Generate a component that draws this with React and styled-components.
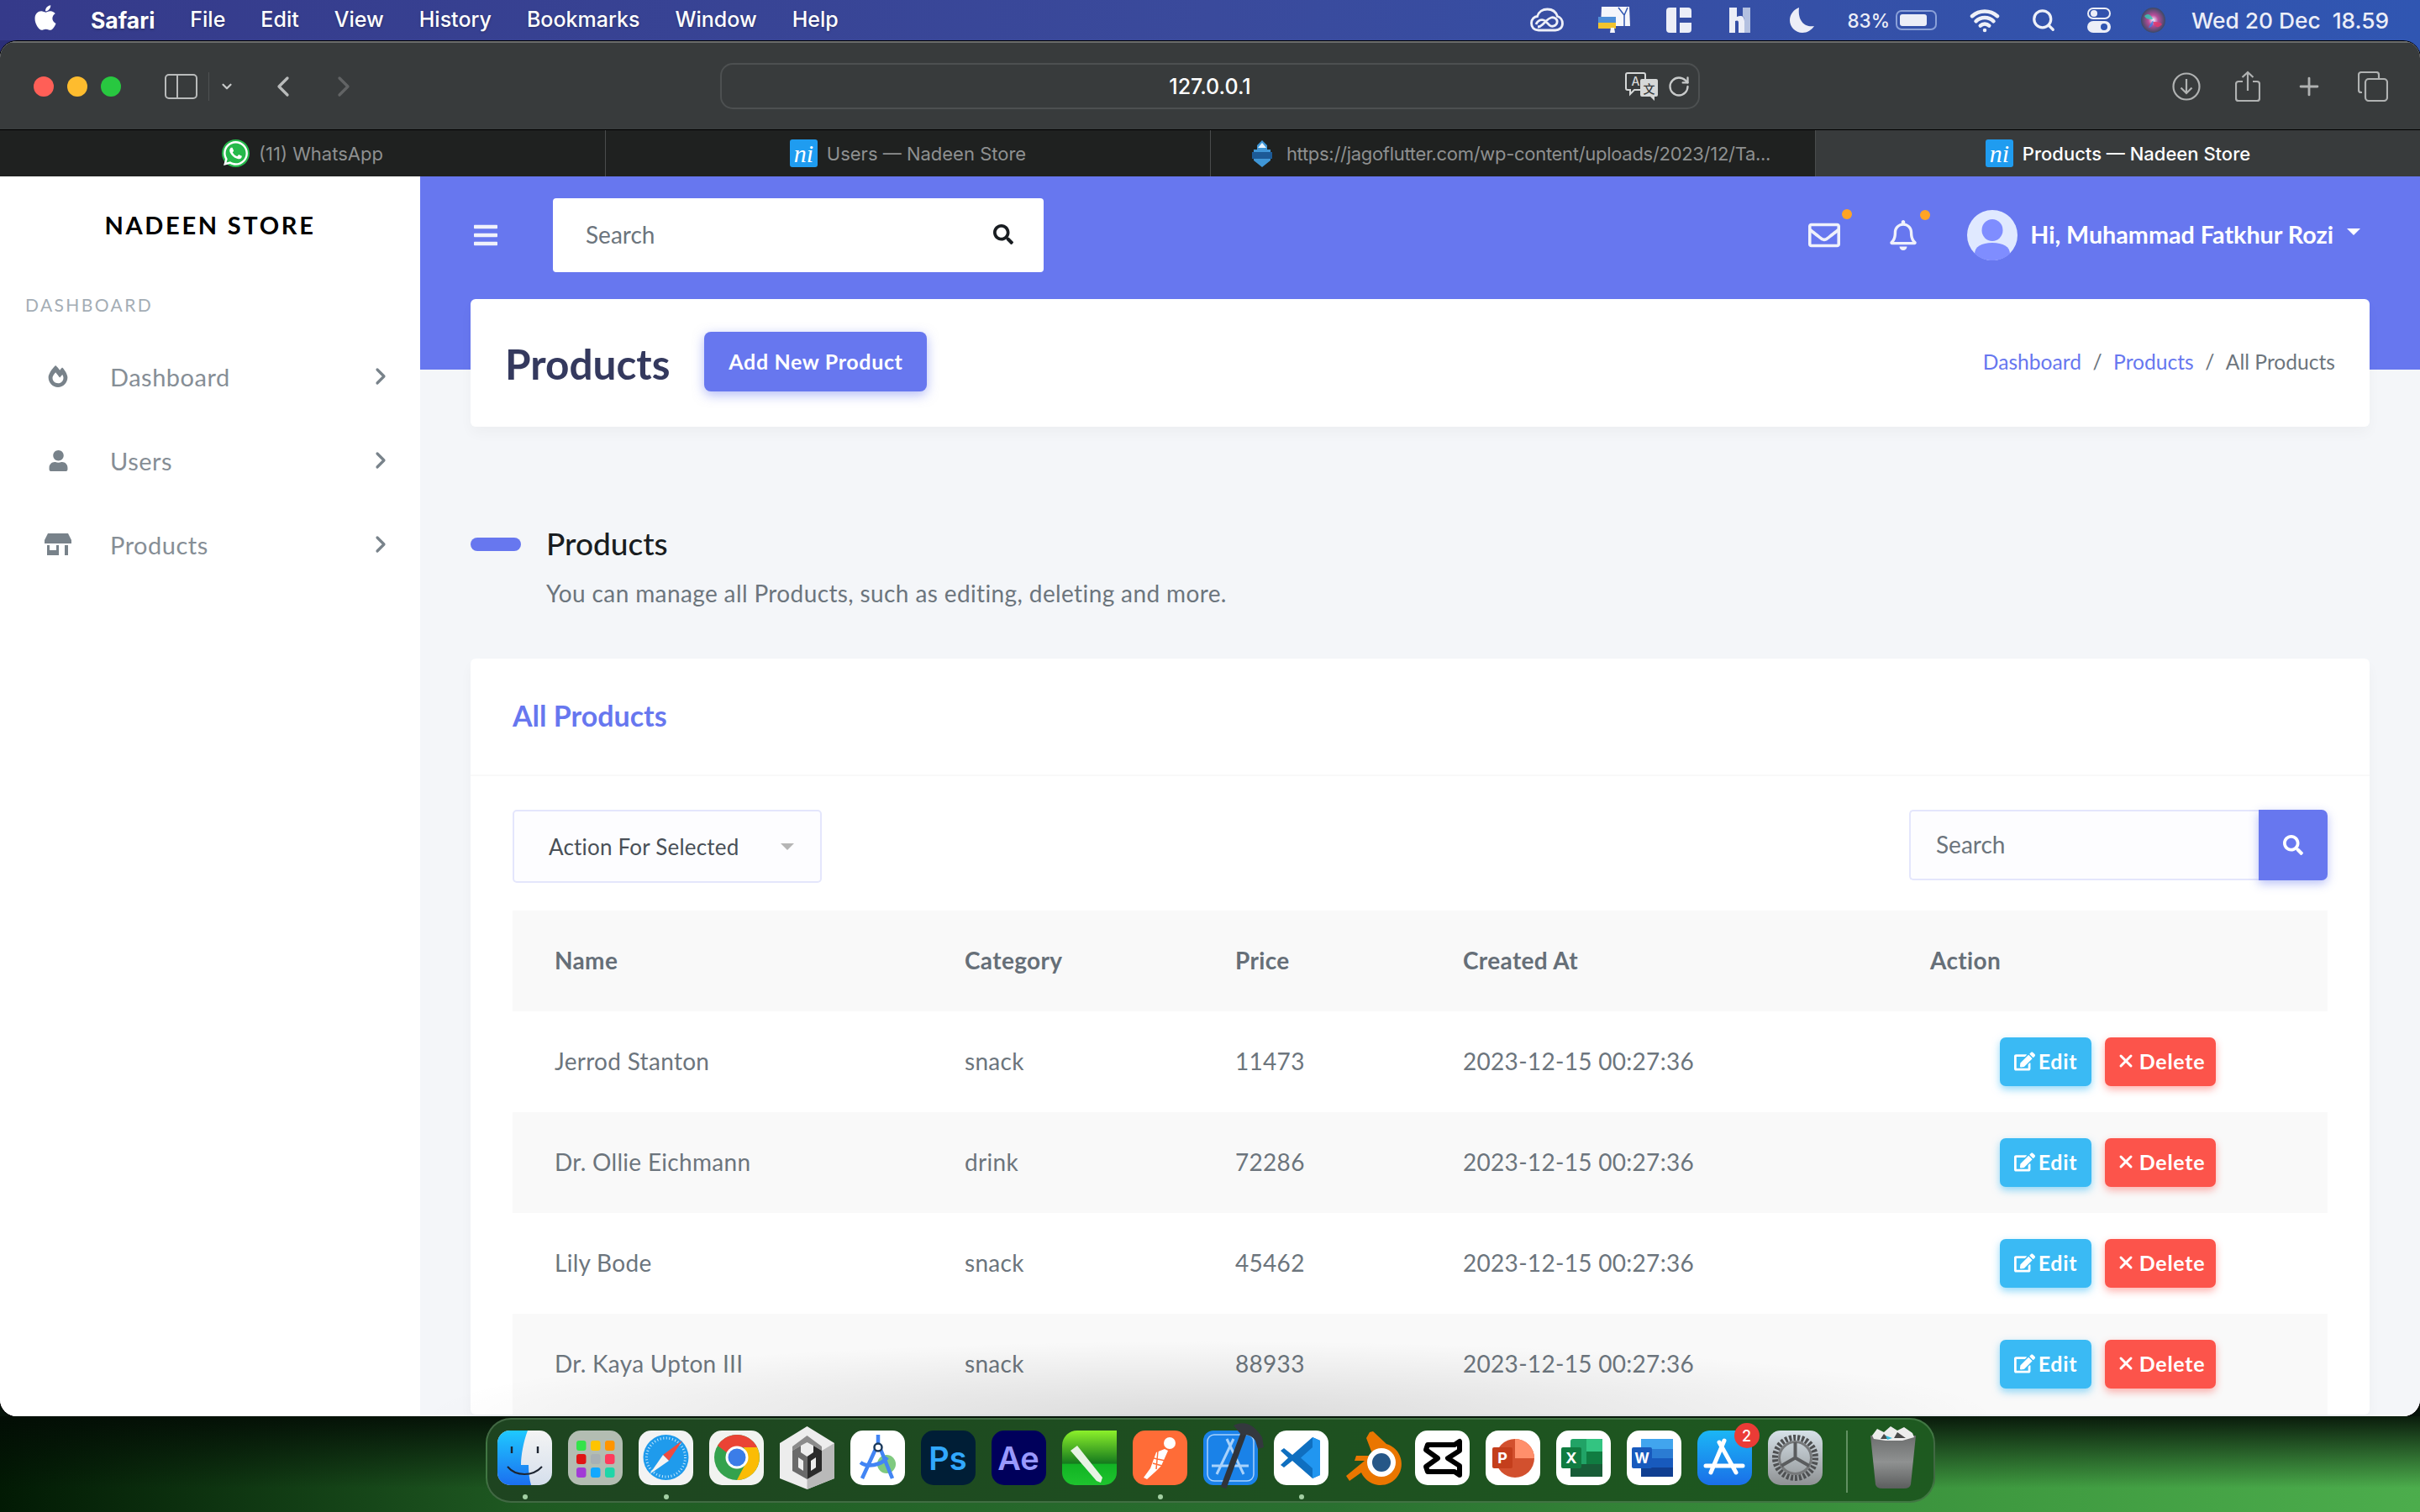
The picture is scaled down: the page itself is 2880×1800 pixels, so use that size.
import React from 'react';
import styled, { createGlobalStyle } from 'styled-components';
import { FaApple, FaFireAlt, FaUser, FaBars, FaSearch, FaRegEnvelope, FaRegBell, FaEdit, FaWhatsapp } from 'react-icons/fa';
import { ChevronDown, ChevronLeft, ChevronRight, Plus, RotateCw, Search as SearchLine, Wifi, X } from 'lucide-react';

const GlobalStyle = createGlobalStyle`
	html, body {
		margin: 0;
		padding: 0;
		background: #0c2a10;
	}
	* {
		box-sizing: border-box;
	}
`;

const site = `'Lato', 'Noto Sans', sans-serif`;
const mac = `'Inter', 'Liberation Sans', sans-serif`;

const rows = [
	['Jerrod Stanton', 'snack', '11473'],
	['Dr. Ollie Eichmann', 'drink', '72286'],
	['Lily Bode', 'snack', '45462'],
	['Dr. Kaya Upton III', 'snack', '88933'],
];

const StatusIcons = {
	cloud: (
		<svg width="40" height="30" viewBox="0 0 40 30" fill="none" stroke="#eef0f8" strokeWidth="2.800">
			<path d="M10 27C4 27 1.500 23 1.500 18.500 1.500 14 5 10.500 8.500 10.500 10 5 15 2 20.500 2 27 2 31 6 32.500 10.500 36 11.500 38.500 15 38.500 19 38.500 24 34.500 27 30 27Z" />
			<path d="M7 20c2-5 7-7 11-4l5 5c3 2.500 8 1 9-3 1-4-3-7-7-6-3 .8-5 3-7 5l-3 3c-2 2-4 3-6 3" />
		</svg>
	),
	flag: (
		<svg width="38" height="32" viewBox="0 0 38 32">
			<path d="M4 0H37L38 23H3Z" fill="#f5f6fb" />
			<path d="M24 1L31 10V23M35 1L31 10" stroke="#3056b2" strokeWidth="1.500" fill="none" />
			<rect x="0" y="12" width="21" height="7" fill="#4f8fd8" />
			<rect x="0" y="19" width="21" height="7" fill="#f2c42d" />
			<path d="M15 25H19L20 31H14Z" fill="#f5f6fb" />
		</svg>
	),
	layout: (
		<svg width="30" height="30" viewBox="0 0 30 30">
			<path d="M4 0H12V30H4A4 4 0 0 1 0 26V4A4 4 0 0 1 4 0ZM16 0H26A4 4 0 0 1 30 4V12H16ZM16 18H30V26A4 4 0 0 1 26 30H16Z" fill="#eceef7" />
		</svg>
	),
	hopper: (
		<svg width="25" height="30" viewBox="0 0 25 30">
			<path d="M0 0H9V11C14 9 18 10 18 16V30H11V18C11 15 9 15 7 16V30H0Z" fill="#eceef7" />
			<path d="M16 0H25V30H18V16C18 12 17 11 16 10.500Z" fill="#b3c0e0" />
		</svg>
	),
	moon: (
		<svg width="29" height="30" viewBox="0 0 29 30">
			<path d="M11 0C5 2 0 8 0 15 0 23 6.500 30 15 30 21 30 26 26.500 29 22 19 24 9 17 11 0Z" fill="#eceef7" />
		</svg>
	),
	control: (
		<svg width="28" height="30" viewBox="0 0 28 30" fill="none">
			<rect x="1" y="1" width="26" height="12" rx="6" stroke="#eceef7" strokeWidth="2" />
			<circle cx="8" cy="7" r="4" fill="#eceef7" />
			<rect x="0" y="16" width="28" height="14" rx="7" fill="#eceef7" />
			<circle cx="20" cy="23" r="4" fill="#3056b2" />
		</svg>
	),
	siri: (
		<svg width="29" height="30" viewBox="0 0 29 30">
			<defs>
				<radialGradient id="siriGlow" cx="50%" cy="50%" r="50%">
					<stop offset="0" stopColor="#f4f6ff" />
					<stop offset=".4" stopColor="#b94d9a" />
					<stop offset="1" stopColor="#3a4a66" />
				</radialGradient>
			</defs>
			<ellipse cx="14.500" cy="15" rx="14.500" ry="15" fill="url(#siriGlow)" />
			<path d="M4 10C8 6 12 8 14 14 9 14 6 14 4 10Z" fill="#2fd0b5" opacity=".8" />
			<path d="M25 20C21 25 16 24 14 17 19 17 23 17 25 20Z" fill="#e0386f" opacity=".85" />
			<path d="M9 24C11 19 13 17 14.500 15 15 20 13 24 9 24Z" fill="#3a7ee8" opacity=".8" />
		</svg>
	),
};

const App = () => {
	return (
		<Root>
			<GlobalStyle />
			<MenuBar>
				<AppleMark><FaApple size={34} color="#fff" /></AppleMark>
				<MenuList>
					<MenuItem $bold>Safari</MenuItem>
					{['File', 'Edit', 'View', 'History', 'Bookmarks', 'Window', 'Help'].map((item) => (
						<MenuItem key={item}>{item}</MenuItem>
					))}
				</MenuList>
				<StatusArea>
					<StatusSlot $left={0}>{StatusIcons.cloud}</StatusSlot>
					<StatusSlot $left={41}>{StatusIcons.flag}</StatusSlot>
					<StatusSlot $left={43}>{StatusIcons.layout}</StatusSlot>
					<StatusSlot $left={45}>{StatusIcons.hopper}</StatusSlot>
					<StatusSlot $left={47}>{StatusIcons.moon}</StatusSlot>
					<StatusText $left={39}>83%</StatusText>
					<Battery><BatteryFill /></Battery>
					<StatusSlot $left={39}><Wifi size={36} color="#eef0f8" strokeWidth={3} /></StatusSlot>
					<StatusSlot $left={37}><SearchLine size={30} color="#eef0f8" strokeWidth={2.6} /></StatusSlot>
					<StatusSlot $left={37}>{StatusIcons.control}</StatusSlot>
					<StatusSlot $left={36}>{StatusIcons.siri}</StatusSlot>
					<StatusText $left={31} $wide>Wed 20 Dec&nbsp;&nbsp;18.59</StatusText>
				</StatusArea>
			</MenuBar>

			<SafariWindow>
				<Toolbar>
					<ToolbarLeft>
						<Light $color="#ff5f57" />
						<Light $color="#febc2e" />
						<Light $color="#28c840" />
						<SidebarButton>
							<SidebarGlyph />
						</SidebarButton>
						<ToolDivider />
						<ChevronDown size={18} color="#c6c8c8" strokeWidth={3} />
						<BackIcon><ChevronLeft size={40} color="#b9bbbb" strokeWidth={2} /></BackIcon>
						<ForwardIcon><ChevronRight size={40} color="#626465" strokeWidth={2} /></ForwardIcon>
					</ToolbarLeft>
					<UrlBar>
						127.0.0.1
						<UrlTools>
							<svg width="40" height="36" viewBox="0 0 40 36">
								<path d="M3 2H22A2 2 0 0 1 24 4V20A2 2 0 0 1 22 22H11L6 27V22H3A2 2 0 0 1 1 20V4A2 2 0 0 1 3 2Z" fill="#383b3c" stroke="#d6d8d8" strokeWidth="2" />
								<text x="12.500" y="17" fontFamily={mac} fontSize="14" fill="#d6d8d8" textAnchor="middle">A</text>
								<path d="M20 9H37A2 2 0 0 1 39 11V28A2 2 0 0 1 37 30H35V35L30 30H20A2 2 0 0 1 18 28V11A2 2 0 0 1 20 9Z" fill="#d6d8d8" />
								<text x="28.500" y="26" fontFamily="'Noto Sans CJK SC', sans-serif" fontSize="14" fill="#383b3c" textAnchor="middle">文</text>
							</svg>
							<RotateCw size={28} color="#c8caca" strokeWidth={2} />
						</UrlTools>
					</UrlBar>
					<ToolbarRight>
						<svg width="34" height="34" viewBox="0 0 34 34" fill="none" stroke="#b0b2b2" strokeWidth="2.200">
							<circle cx="17" cy="17" r="15.500" />
							<path d="M17 8V25M10.500 18.500L17 25L23.500 18.500" />
						</svg>
						<svg width="30" height="38" viewBox="0 0 30 38" fill="none" stroke="#b0b2b2" strokeWidth="2.200">
							<path d="M9 13H4A3 3 0 0 0 1 16V33A3 3 0 0 0 4 36H26A3 3 0 0 0 29 33V16A3 3 0 0 0 26 13H21" />
							<path d="M15 24V2M8.500 8L15 2L21.500 8" />
						</svg>
						<Plus size={34} color="#b0b2b2" strokeWidth={2} />
						<svg width="36" height="36" viewBox="0 0 36 36" fill="none" stroke="#b0b2b2" strokeWidth="2.200">
							<path d="M5 25H4A3 3 0 0 1 1 22V4A3 3 0 0 1 4 1H22A3 3 0 0 1 25 4V9" />
							<rect x="9" y="9" width="26" height="26" rx="4" />
						</svg>
					</ToolbarRight>
				</Toolbar>

				<TabBar>
					<Tab>
						<WhatsAppMark><FaWhatsapp size={33} color="#fff" /></WhatsAppMark>
						(11) WhatsApp
					</Tab>
					<Tab><NiMark>ni</NiMark>Users — Nadeen Store</Tab>
					<Tab $tight>
						<svg width="30" height="32" viewBox="0 0 30 32">
							<path d="M15 0L21 6V11H25V24L15 32 5 24V11H9V6Z" fill="#3f96d6" />
							<rect x="3" y="14" width="24" height="8" fill="#1c5a96" />
							<path d="M15 3L20 9H10Z" fill="#e6f4ff" />
						</svg>
						https://jagoflutter.com/wp-content/uploads/2023/12/Ta...
					</Tab>
					<Tab $active><NiMark>ni</NiMark>Products — Nadeen Store</Tab>
				</TabBar>

				<PageBody>
					<Sidebar>
						<Brand>NADEEN STORE</Brand>
						<MenuHeader>DASHBOARD</MenuHeader>
						<SideMenu>
							<SideLink>
								<SideIcon><FaFireAlt size={26} /></SideIcon>
								<SideLabel>Dashboard</SideLabel>
								<ChevronRight size={32} color="#78828a" strokeWidth={2.4} />
							</SideLink>
							<SideLink>
								<SideIcon><FaUser size={25} /></SideIcon>
								<SideLabel>Users</SideLabel>
								<ChevronRight size={32} color="#78828a" strokeWidth={2.4} />
							</SideLink>
							<SideLink>
								<SideIcon>
									<svg width="32" height="26" viewBox="0 0 32 26" fill="currentColor">
										<path d="M4 0H28L32 8V12H0V8Z" />
										<path d="M3 14H6V20H14V14H17V26H3Z" />
										<rect x="24" y="14" width="4" height="12" />
									</svg>
								</SideIcon>
								<SideLabel>Products</SideLabel>
								<ChevronRight size={32} color="#78828a" strokeWidth={2.4} />
							</SideLink>
						</SideMenu>
					</Sidebar>

					<Main>
						<TopNav>
							<FaBars size={32} color="#f0f1fb" />
							<NavSearch>
								Search
								<FaSearch size={24} color="#191d21" />
							</NavSearch>
							<NavRight>
								<NavBell>
									<FaRegEnvelope size={38} color="#f0f1fb" />
									<Beep />
								</NavBell>
								<NavBell>
									<FaRegBell size={36} color="#f0f1fb" />
									<Beep />
								</NavBell>
								<NavUser>
									<svg width="60" height="60" viewBox="0 0 60 60">
										<circle cx="30" cy="30" r="30" fill="#e0e9ff" />
										<ellipse cx="30" cy="24" rx="12.500" ry="13" fill="#7f8dff" />
										<path d="M9 52C9 44 17 39 30 39 43 39 51 44 51 52 45 57.500 38 60 30 60 22 60 15 57.500 9 52Z" fill="#7f8dff" />
									</svg>
									<NavUserName>Hi, Muhammad Fatkhur Rozi</NavUserName>
									<Caret />
								</NavUser>
							</NavRight>
						</TopNav>

						<HeaderCard>
							<PageTitle>Products</PageTitle>
							<PrimaryButton>Add New Product</PrimaryButton>
							<Breadcrumb>
								<Crumb $link>Dashboard</Crumb>
								<Slash>/</Slash>
								<Crumb $link>Products</Crumb>
								<Slash>/</Slash>
								<Crumb>All Products</Crumb>
							</Breadcrumb>
						</HeaderCard>

						<SectionTitle>Products</SectionTitle>
						<SectionLead>You can manage all Products, such as editing, deleting and more.</SectionLead>

						<Card>
							<CardHeader>All Products</CardHeader>
							<CardBody>
								<TableTools>
									<SelectBox>
										Action For Selected
										<SelectCaret />
									</SelectBox>
									<SearchGroup>
										<SearchInput>Search</SearchInput>
										<SearchButton><FaSearch size={24} color="#fff" /></SearchButton>
									</SearchGroup>
								</TableTools>
								<Table>
									<colgroup>
										<Col $w={488} />
										<Col $w={322} />
										<Col $w={271} />
										<Col $w={556} />
										<Col $w={523} />
									</colgroup>
									<thead>
										<tr>
											<Th>Name</Th>
											<Th>Category</Th>
											<Th>Price</Th>
											<Th>Created At</Th>
											<Th>Action</Th>
										</tr>
									</thead>
									<tbody>
										{rows.map(([name, category, price]) => (
											<Tr key={name}>
												<Td>{name}</Td>
												<Td>{category}</Td>
												<Td>{price}</Td>
												<Td>2023-12-15 00:27:36</Td>
												<Td>
													<Actions>
														<ActionButton $color="#3abaf4" $glow="rgba(58,186,244,.55)" $w={109}>
															<FaEdit size={25} />Edit
														</ActionButton>
														<ActionButton $color="#fc544b" $glow="rgba(252,84,75,.45)" $w={132}>
															<X size={24} strokeWidth={3} />Delete
														</ActionButton>
													</Actions>
												</Td>
											</Tr>
										))}
									</tbody>
								</Table>
							</CardBody>
						</Card>
						<DockShade />
					</Main>
				</PageBody>
			</SafariWindow>

			<Desktop>
				<Dock>
					<DockItem $on>
						<svg width="65" height="65" viewBox="0 0 65 65">
							<defs>
								<linearGradient id="finderL" x1="0" y1="0" x2="0" y2="1"><stop offset="0" stopColor="#1fc9ff" /><stop offset="1" stopColor="#1b6ff0" /></linearGradient>
								<linearGradient id="finderR" x1="0" y1="0" x2="0" y2="1"><stop offset="0" stopColor="#f4f4f4" /><stop offset="1" stopColor="#d5dfec" /></linearGradient>
							</defs>
							<rect width="65" height="65" rx="15" fill="url(#finderR)" />
							<path d="M15 0H36C31 13 28 30 28 41H37C37 50 38 58 40 65H15A15 15 0 0 1 0 50V15A15 15 0 0 1 15 0Z" fill="url(#finderL)" />
							<path d="M17 19V27M48 19V27" stroke="#1c2430" strokeWidth="2.400" />
							<path d="M12 43C22 55 42 55 53 43" fill="none" stroke="#1c2430" strokeWidth="2" />
						</svg>
					</DockItem>
					<DockItem>
						<svg width="65" height="65" viewBox="0 0 65 65">
							<rect width="65" height="65" rx="15" fill="#b3bdb2" />
							{['#34e34a', '#ffc400', '#ff9500', '#e01414', '#a8b0b4', '#ff3b5c', '#a13bd6', '#12a8ff', '#1fd6a8'].map((c, i) => (
								<rect key={c} x={10 + (i % 3) * 17} y={12 + Math.floor(i / 3) * 16} width="11.500" height="12" rx="3" fill={c} />
							))}
						</svg>
					</DockItem>
					<DockItem $on>
						<svg width="65" height="65" viewBox="0 0 65 65">
							<rect width="65" height="65" rx="15" fill="#f2f3f3" />
							<circle cx="32.500" cy="32" r="27" fill="#1f9bec" />
							<circle cx="32.500" cy="32" r="23" fill="none" stroke="#c8e8fb" strokeWidth="3" strokeDasharray="1 2.600" />
							<path d="M52 12L36 36 29 29Z" fill="#ef4b3f" />
							<path d="M13 52L29 29 36 36Z" fill="#f4f4f4" />
						</svg>
					</DockItem>
					<DockItem>
						<svg width="65" height="65" viewBox="0 0 65 65">
							<rect width="65" height="65" rx="15" fill="#f1f3f0" />
							<circle cx="33" cy="32" r="27" fill="#34a24d" />
							<path d="M33 5A27 27 0 0 1 57 20H33A12 12 0 0 0 22 27L10 18A27 27 0 0 1 33 5Z" fill="#ea4335" />
							<path d="M57 20A27 27 0 0 1 33 59L44 38A12 12 0 0 0 44 26L41 20Z" fill="#fbbc05" />
							<circle cx="33" cy="32" r="13.500" fill="#fff" />
							<circle cx="33" cy="32" r="10.500" fill="#3b7de8" />
						</svg>
					</DockItem>
					<DockItem>
						<svg width="65" height="65" viewBox="0 0 65 65" overflow="visible">
							<path d="M32.500 -5L65 15V57L32.500 70L0 57V15Z" fill="#ededed" />
							<path d="M32.500 70L65 57V15L50 24V48L32.500 58Z" fill="#b9b9b9" />
							<path d="M32.500 6L50 19V24L40 18L32.500 14L25 18L15 24V19Z" fill="#8b8b8b" />
							<path d="M15 24L25 18V26L32.500 31V58L15 48Z" fill="#6a6a6a" />
							<path d="M50 24L40 18V26L32.500 31V58L50 48Z" fill="#2a2a2a" />
							<path d="M22 32L28 36V48L22 44ZM43 32L37 36V48L43 44Z" fill="#ededed" />
						</svg>
					</DockItem>
					<DockItem>
						<svg width="65" height="65" viewBox="0 0 65 65">
							<rect width="65" height="65" rx="15" fill="#fff" />
							<circle cx="43" cy="40" r="11" fill="#7fc97f" />
							<path d="M33 5V17M31 20L14 57M35 20L50 57M12 38C20 44 36 42 44 32" fill="none" stroke="#4285f4" strokeWidth="4.500" />
							<circle cx="33" cy="20" r="4.500" fill="#fff" stroke="#1b3a5c" strokeWidth="2.500" />
						</svg>
					</DockItem>
					<DockItem>
						<DockTile $bg="#001e36" $color="#31a8ff">Ps</DockTile>
					</DockItem>
					<DockItem>
						<DockTile $bg="#00005b" $color="#9999ff">Ae</DockTile>
					</DockItem>
					<DockItem>
						<svg width="65" height="65" viewBox="0 0 65 65">
							<defs>
								<linearGradient id="noteG" x1="0" y1="0" x2="0" y2="1"><stop offset="0" stopColor="#8cf02a" /><stop offset=".6" stopColor="#157a1e" /><stop offset=".62" stopColor="#12b324" /><stop offset="1" stopColor="#1ec42e" /></linearGradient>
							</defs>
							<path d="M18 0H65V50A15 15 0 0 1 50 65H15A15 15 0 0 1 0 50V18A18 18 0 0 1 18 0Z" fill="url(#noteG)" />
							<path d="M10 24L18 18 48 56 46 62 41 60Z" fill="#e8f3e4" />
						</svg>
					</DockItem>
					<DockItem $on>
						<svg width="65" height="65" viewBox="0 0 65 65">
							<rect width="65" height="65" rx="15" fill="#ff6c37" />
							<circle cx="44" cy="15" r="7" fill="#fff" />
							<path d="M38 22L28 26 21 45 13 56 17 58 27 49 34 42 42 24Z" fill="#fff" />
							<path d="M25 33L39 36M24 39L35 42M30 24L28 46" stroke="#ff6c37" strokeWidth="1.500" />
						</svg>
					</DockItem>
					<DockItem>
						<svg width="65" height="65" viewBox="0 0 65 65" overflow="visible">
							<rect width="65" height="65" rx="12" fill="#1a82e8" />
							<rect x="5" y="5" width="55" height="55" rx="8" fill="none" stroke="#a8d2fb" strokeWidth="1.500" />
							<path d="M28 10L48 52M36 10L16 52M10 42H54" stroke="#a8d2fb" strokeWidth="3" fill="none" />
							<path d="M50 -2L24 68" stroke="#30343a" strokeWidth="7" />
							<path d="M36 -6C48 -12 60 -8 70 8L72 20 65 22 62 12C58 6 52 4 46 6Z" fill="#34383e" />
						</svg>
					</DockItem>
					<DockItem $on>
						<svg width="65" height="65" viewBox="0 0 65 65">
							<rect width="65" height="65" rx="15" fill="#fff" />
							<path d="M46 8L55 12V53L46 57 22 36 12 44 8 41 17 32.500 8 24 12 21 22 29Z" fill="#0f6fc0" />
							<path d="M46 8L55 12V53L46 57V20L32 32.500 46 45Z" fill="#2196f0" />
						</svg>
					</DockItem>
					<DockItem>
						<svg width="72" height="74" viewBox="0 0 72 74" overflow="visible">
							<path d="M34 1L50 16A25 25 0 1 1 20 50L6 60 2 54 24 36H12L14 30H34L26 9 30 2Z" fill="#ea7600" />
							<circle cx="44" cy="38" r="17" fill="#fff" />
							<circle cx="44" cy="38" r="11" fill="#265787" />
						</svg>
					</DockItem>
					<DockItem>
						<svg width="65" height="65" viewBox="0 0 65 65">
							<rect width="65" height="65" rx="15" fill="#fff" />
							<path d="M15 17H47L53 13V24L39 33 53 42V53L47 49H15L13 43 27 33 13 23Z" fill="#fff" stroke="#000" strokeWidth="6" strokeLinejoin="round" />
							<path d="M18 20H46L32 30ZM18 46L32 36 46 46Z" fill="#fff" />
						</svg>
					</DockItem>
					<DockItem>
						<svg width="65" height="65" viewBox="0 0 65 65">
							<rect width="65" height="65" rx="15" fill="#fff" />
							<circle cx="35" cy="33" r="23" fill="#d2502e" />
							<path d="M35 10A23 23 0 0 1 58 33H35Z" fill="#ff8f6b" />
							<rect x="8" y="20" width="24" height="25" rx="2" fill="#c43e1c" />
							<text x="20" y="39" fontFamily={mac} fontSize="18" fontWeight="700" fill="#fff" textAnchor="middle">P</text>
						</svg>
					</DockItem>
					<DockItem>
						<svg width="65" height="65" viewBox="0 0 65 65">
							<rect width="65" height="65" rx="15" fill="#fff" />
							<rect x="17" y="10" width="38" height="45" rx="3" fill="#21a366" />
							<rect x="36" y="10" width="19" height="15" fill="#33c481" />
							<rect x="36" y="25" width="19" height="15" fill="#107c41" />
							<rect x="17" y="40" width="38" height="15" fill="#185c37" />
							<rect x="6" y="20" width="24" height="25" rx="2" fill="#107c41" />
							<text x="18" y="39" fontFamily={mac} fontSize="18" fontWeight="700" fill="#fff" textAnchor="middle">X</text>
						</svg>
					</DockItem>
					<DockItem>
						<svg width="65" height="65" viewBox="0 0 65 65">
							<rect width="65" height="65" rx="15" fill="#fff" />
							<rect x="17" y="10" width="38" height="45" rx="3" fill="#2b7cd3" />
							<rect x="17" y="10" width="38" height="12" fill="#41a5ee" />
							<rect x="17" y="33" width="38" height="11" fill="#185abd" />
							<rect x="17" y="44" width="38" height="11" fill="#103f91" />
							<rect x="6" y="20" width="24" height="25" rx="2" fill="#185abd" />
							<text x="18" y="39" fontFamily={mac} fontSize="17" fontWeight="700" fill="#fff" textAnchor="middle">W</text>
						</svg>
					</DockItem>
					<DockItem>
						<svg width="65" height="65" viewBox="0 0 65 65">
							<defs>
								<linearGradient id="storeG" x1="0" y1="0" x2="0" y2="1"><stop offset="0" stopColor="#1bb6f6" /><stop offset="1" stopColor="#1a6fe8" /></linearGradient>
							</defs>
							<rect width="65" height="65" rx="15" fill="url(#storeG)" />
							<path d="M32 12L16 50M26 14L46 50M10 42H54" stroke="#fff" strokeWidth="5" strokeLinecap="round" fill="none" />
						</svg>
						<DockBadge>2</DockBadge>
					</DockItem>
					<DockItem>
						<svg width="65" height="65" viewBox="0 0 65 65" fill="none">
							<defs>
								<linearGradient id="gearG" x1="0" y1="0" x2="0" y2="1"><stop offset="0" stopColor="#d6e1e8" /><stop offset="1" stopColor="#8f9294" /></linearGradient>
							</defs>
							<rect width="65" height="65" rx="15" fill="url(#gearG)" />
							<circle cx="32.500" cy="32.500" r="24" stroke="#4e5052" strokeWidth="7" strokeDasharray="3 2" />
							<circle cx="32.500" cy="32.500" r="19" stroke="#77797b" strokeWidth="3" />
							<path d="M32.500 32.500V14M32.500 32.500L16 42M32.500 32.500L49 42" stroke="#5a5c5e" strokeWidth="4" />
						</svg>
					</DockItem>
					<DockDivider />
					<DockItem $trash>
						<svg width="58" height="76" viewBox="0 0 58 76">
							<defs>
								<linearGradient id="trashG" x1="0" y1="0" x2="0" y2="1"><stop offset="0" stopColor="#6c6e6e" /><stop offset=".5" stopColor="#8f9191" /><stop offset="1" stopColor="#5c5e5e" /></linearGradient>
							</defs>
							<path d="M2 12H56L50 70Q49 75 42 75H16Q9 75 8 70Z" fill="url(#trashG)" />
							<path d="M4 12L10 4 18 8 26 1 34 6 42 2 52 9 54 14 40 18 20 18 6 16Z" fill="#ececec" />
							<path d="M18 10L24 16H14ZM34 8L44 15H30Z" fill="#4a4a4a" />
							<path d="M20 12L28 15 22 17Z" fill="#35b8d8" />
						</svg>
					</DockItem>
				</Dock>
			</Desktop>
		</Root>
	);
};

export default App;

const Root = styled.div`
	width: 2880px;
	height: 1800px;
	overflow: hidden;
	display: flex;
	flex-direction: column;
	background:
		linear-gradient(to right, #2b2f78, #3056b2) top / 100% 100px no-repeat,
		#06140a;
`;

const MenuBar = styled.div`
	height: 48px;
	flex: none;
	display: flex;
	align-items: center;
	padding-left: 41px;
	background: linear-gradient(to right, #353a8a, #3a4a9c 50%, #3056b2);
	color: #fff;
	font-family: ${mac};
	font-size: 25px;
`;

const AppleMark = styled.div`
	display: flex;
	margin-top: -6px;
	width: 71px;
	margin-left: -4px;
`;

const MenuList = styled.div`
	display: flex;
	gap: 42px;
`;

const MenuItem = styled.span`
	font-size: ${(p) => (p.$bold ? '26.500px' : '25px')};
	font-weight: ${(p) => (p.$bold ? 700 : 500)};
	text-shadow: 0 1px 3px rgba(0, 0, 0, 0.3);
`;

const StatusArea = styled.div`
	margin-left: auto;
	display: flex;
	align-items: center;
	padding-right: 37px;
`;

const StatusSlot = styled.div`
	display: flex;
	margin-left: ${(p) => p.$left}px;
`;

const StatusText = styled.span`
	margin-left: ${(p) => p.$left}px;
	color: #eceef7;
	font-size: ${(p) => (p.$wide ? '26.300px' : '22.500px')};
	font-weight: 500;
`;

const Battery = styled.div`
	width: 49px;
	height: 24px;
	margin-left: 7px;
	padding: 3px;
	border: 2px solid #8aa0d8;
	border-radius: 7px;
	display: flex;
`;

const BatteryFill = styled.div`
	width: 82%;
	background: #eceef7;
	border-radius: 3px;
`;

const SafariWindow = styled.div`
	height: 1637px;
	margin-top: 1px;
	flex: none;
	display: flex;
	flex-direction: column;
	overflow: hidden;
	border-radius: 20px;
	background: #fff;
	box-shadow: 0 0 0 1px #000;
`;

const Toolbar = styled.div`
	height: 105px;
	flex: none;
	display: grid;
	grid-template-columns: 857px 1fr 857px;
	align-items: center;
	background: #383b3c;
	border-top: 2px solid #6a6c6c;
`;

const ToolbarLeft = styled.div`
	display: flex;
	align-items: center;
	padding-left: 40px;
`;

const Light = styled.span`
	width: 24px;
	height: 24px;
	margin-right: 16px;
	border-radius: 50%;
	background: ${(p) => p.$color};
`;

const SidebarButton = styled.div`
	width: 39px;
	height: 30px;
	margin-left: 36px;
	border: 2.500px solid #b9bbbb;
	border-radius: 5px;
	display: flex;
`;

const SidebarGlyph = styled.div`
	width: 14px;
	border-right: 2.500px solid #b9bbbb;
`;

const ToolDivider = styled.span`
	width: 1px;
	height: 34px;
	margin: 0 12px 0 13px;
	background: #4f5152;
`;

const BackIcon = styled.div`
	display: flex;
	margin-left: 38px;
`;

const ForwardIcon = styled.div`
	display: flex;
	margin-left: 32px;
`;

const UrlBar = styled.div`
	position: relative;
	height: 55px;
	display: flex;
	align-items: center;
	justify-content: center;
	border: 2.500px solid #4d5051;
	border-radius: 15px;
	color: #fff;
	font-family: ${mac};
	font-size: 25px;
	font-weight: 500;
`;

const UrlTools = styled.div`
	position: absolute;
	right: 9px;
	top: 8px;
	display: flex;
	align-items: center;
	gap: 10px;
`;

const ToolbarRight = styled.div`
	display: flex;
	align-items: center;
	justify-content: flex-end;
	gap: 41px;
	padding-right: 38px;
`;

const TabBar = styled.div`
	height: 56px;
	flex: none;
	display: grid;
	grid-template-columns: repeat(4, 1fr);
	background: #1f2120;
	border-top: 1px solid #000;
`;

const Tab = styled.div`
	display: flex;
	align-items: center;
	justify-content: center;
	gap: ${(p) => (p.$tight ? '14px' : '11px')};
	padding-right: ${(p) => (p.$tight ? '7px' : '0')};
	border-left: 1px solid #4a4c4c;
	background: ${(p) => (p.$active ? '#383b3c' : 'transparent')};
	color: ${(p) => (p.$active ? '#fff' : '#8e9090')};
	font-family: ${mac};
	font-size: 22px;
	font-weight: ${(p) => (p.$active ? 500 : 400)};
	letter-spacing: ${(p) => (p.$tight ? '-0.300px' : '0')};

	&:first-child {
		border-left: 0;
	}
`;

const WhatsAppMark = styled.span`
	width: 33px;
	height: 33px;
	display: flex;
	align-items: center;
	justify-content: center;
	border-radius: 50%;
	background: #25b94a;
`;

const NiMark = styled.span`
	width: 33px;
	height: 33px;
	display: flex;
	align-items: center;
	justify-content: center;
	border-radius: 3px;
	background: #1f9cf0;
	color: #fff;
	font-family: 'Liberation Serif', serif;
	font-size: 30px;
	font-style: italic;
	line-height: 33px;
`;

const PageBody = styled.div`
	flex: 1;
	min-height: 0;
	display: flex;
	font-family: ${site};
`;

const Sidebar = styled.aside`
	width: 500px;
	flex: none;
	background: #fff;
`;

const Brand = styled.div`
	margin-top: 40px;
	text-align: center;
	color: #000;
	font-size: 29px;
	font-weight: 700;
	letter-spacing: 2.700px;
	line-height: 36px;
`;

const MenuHeader = styled.div`
	margin: 64px 0 0 30px;
	color: #a4adb5;
	font-size: 21px;
	letter-spacing: 2.400px;
	line-height: 26px;
`;

const SideMenu = styled.nav`
	margin-top: 22px;
`;

const SideLink = styled.div`
	height: 100px;
	display: flex;
	align-items: center;
	padding: 0 31px 0 52px;
`;

const SideIcon = styled.span`
	width: 34px;
	margin-right: 45px;
	display: flex;
	justify-content: center;
	color: #78828a;
`;

const SideLabel = styled.span`
	flex: 1;
	color: #868e96;
	font-size: 29px;
	letter-spacing: 0.500px;
`;

const Main = styled.main`
	position: relative;
	flex: 1;
	min-width: 0;
	padding: 0 60px;
	background: linear-gradient(#6777ef 230px, #f4f6f9 230px);
`;

const TopNav = styled.div`
	height: 146px;
	display: flex;
	align-items: flex-start;
	padding-top: 26px;

	& > svg {
		margin: 28px 64px 0 2px;
	}
`;

const NavSearch = styled.div`
	width: 584px;
	height: 88px;
	display: flex;
	align-items: center;
	justify-content: space-between;
	padding: 0 36px 2px 39px;
	border-radius: 4px;
	background: #fff;
	color: #6c757d;
	font-size: 28px;
`;

const NavRight = styled.div`
	margin-left: auto;
	display: flex;
	align-items: center;
	height: 88px;
	padding-right: 11px;
`;

const NavBell = styled.div`
	position: relative;
	display: flex;
	margin-right: 60px;

	&:first-child {
		margin-right: 57px;
	}
`;

const Beep = styled.span`
	position: absolute;
	top: -12px;
	right: -14px;
	width: 12px;
	height: 12px;
	border-radius: 50%;
	background: #ffa426;
`;

const NavUser = styled.div`
	display: flex;
	align-items: center;
	margin-left: -2px;
`;

const NavUserName = styled.span`
	margin-left: 15px;
	padding-bottom: 2px;
	color: #fff;
	font-size: 28.700px;
	font-weight: 700;
`;

const Caret = styled.span`
	width: 0;
	height: 0;
	margin: -8px 0 0 16px;
	border-left: 8px solid transparent;
	border-right: 8px solid transparent;
	border-top: 8px solid #fff;
`;

const HeaderCard = styled.div`
	height: 152px;
	display: flex;
	align-items: center;
	padding: 0 41px;
	border-radius: 6px;
	background: #fff;
	box-shadow: 0 8px 16px rgba(0, 0, 0, 0.03);
`;

const PageTitle = styled.h1`
	margin: 2px 41px 0 0;
	color: #34395e;
	font-size: 49.500px;
	font-weight: 700;
`;

const PrimaryButton = styled.button`
	width: 265px;
	height: 71px;
	margin-top: -4px;
	border: 0;
	border-radius: 8px;
	background: #6777ef;
	box-shadow: 0 4px 14px rgba(103, 119, 239, 0.5);
	color: #fff;
	font-family: ${site};
	font-size: 25px;
	font-weight: 700;
	letter-spacing: 0.650px;
`;

const Breadcrumb = styled.div`
	margin-left: auto;
	display: flex;
	align-items: center;
	margin-top: -3px;
	font-size: 24.600px;
`;

const Crumb = styled.span`
	color: ${(p) => (p.$link ? '#6777ef' : '#6c757d')};
`;

const Slash = styled.span`
	margin: 0 13.500px;
	color: #6c757d;
`;

const SectionTitle = styled.h2`
	position: relative;
	margin: 118px 0 0;
	padding-left: 90px;
	color: #191d21;
	font-size: 37px;
	font-weight: 500;
	line-height: 42px;

	&::before {
		content: '';
		position: absolute;
		left: 0;
		top: 14px;
		width: 60px;
		height: 16px;
		border-radius: 8px;
		background: #6777ef;
	}
`;

const SectionLead = styled.p`
	margin: 18px 0 0;
	padding-left: 90px;
	color: #6c757d;
	font-size: 28px;
	line-height: 40px;
	letter-spacing: 0.380px;
`;

const Card = styled.section`
	margin-top: 58px;
	border-radius: 6px;
	background: #fff;
	box-shadow: 0 8px 16px rgba(0, 0, 0, 0.03);
`;

const CardHeader = styled.div`
	height: 140px;
	display: flex;
	align-items: center;
	padding: 0 0 4px 50px;
	border-bottom: 2px solid #f9f9f9;
	color: #6777ef;
	font-size: 34px;
	font-weight: 700;
`;

const CardBody = styled.div`
	padding: 40px 50px 0;
`;

const TableTools = styled.div`
	display: flex;
	justify-content: space-between;
	align-items: flex-start;
	height: 120px;
`;

const SelectBox = styled.div`
	position: relative;
	width: 368px;
	height: 87px;
	display: flex;
	align-items: center;
	padding-left: 41px;
	border: 2px solid #e4e6fc;
	border-radius: 5px;
	background: #fdfdff;
	color: #495057;
	font-size: 26px;
	letter-spacing: 0.200px;
`;

const SelectCaret = styled.span`
	position: absolute;
	right: 31px;
	top: 38px;
	width: 0;
	height: 0;
	border-left: 8px solid transparent;
	border-right: 8px solid transparent;
	border-top: 8px solid #b5b5b5;
`;

const SearchGroup = styled.div`
	display: flex;
	width: 498px;
	height: 84px;
`;

const SearchInput = styled.div`
	flex: 1;
	display: flex;
	align-items: center;
	padding: 0 0 2px 30px;
	border: 2px solid #e4e6fc;
	border-right: 0;
	border-radius: 5px 0 0 5px;
	background: #fdfdff;
	color: #6c757d;
	font-size: 28px;
`;

const SearchButton = styled.div`
	width: 82px;
	display: flex;
	align-items: center;
	justify-content: center;
	border-radius: 0 7px 7px 0;
	background: #6777ef;
	box-shadow: 0 4px 12px rgba(103, 119, 239, 0.45);
`;

const Table = styled.table`
	width: 2160px;
	table-layout: fixed;
	border-collapse: collapse;
`;

const Col = styled.col`
	width: ${(p) => p.$w}px;
`;

const Th = styled.th`
	height: 120px;
	padding: 0 0 3px 50px;
	background: #f9f9f9;
	color: #666f78;
	font-size: 28px;
	font-weight: 700;
	letter-spacing: 0.350px;
	text-align: left;
`;

const Tr = styled.tr`
	&:nth-child(even) {
		background: #f9f9f9;
	}
`;

const Td = styled.td`
	height: 120px;
	padding: 0 0 3px 50px;
	color: #6c757d;
	font-size: 28px;
	letter-spacing: 0.300px;

	&:last-child {
		padding: 0;
	}
`;

const Actions = styled.div`
	display: flex;
	justify-content: center;
	gap: 16px;
`;

const ActionButton = styled.button`
	width: ${(p) => p.$w}px;
	height: 58px;
	display: flex;
	align-items: center;
	justify-content: center;
	gap: 4px;
	padding: 0 0 2px;
	border: 0;
	border-radius: 7px;
	background: ${(p) => p.$color};
	box-shadow: 0 4px 10px ${(p) => p.$glow};
	color: #fff;
	font-family: ${site};
	font-size: 25px;
	font-weight: 700;
	letter-spacing: 0.700px;
`;

const DockShade = styled.div`
	position: absolute;
	left: 0;
	bottom: 0;
	width: 1880px;
	height: 90px;
	background: radial-gradient(ellipse 50% 100% at 50% 100%, rgba(0, 0, 0, 0.12), rgba(0, 0, 0, 0));
	pointer-events: none;
`;

const Desktop = styled.div`
	flex: 1;
	display: flex;
	justify-content: center;
	padding-top: 2px;
	background:
		linear-gradient(to bottom, rgba(3, 12, 5, 0.9), rgba(3, 12, 5, 0) 75%),
		linear-gradient(to right, #021a04, #1f5a22 22%, #2a7030 55%, #3f9a40 83%, #4cad4c 100%);
`;

const Dock = styled.div`
	width: 1725px;
	height: 101px;
	display: flex;
	gap: 19px;
	padding: 13px 0 0 12px;
	border: 2px solid rgba(150, 190, 150, 0.3);
	border-radius: 30px;
	background: linear-gradient(to right, #1e4420, #1e5a20);
`;

const DockItem = styled.div`
	position: relative;
	width: ${(p) => (p.$trash ? '58px' : '65px')};
	height: 65px;
	flex: none;
	margin: ${(p) => (p.$trash ? '-6px 0 0 -3px' : '0')};

	&::after {
		content: ${(p) => (p.$on ? "''" : 'none')};
		position: absolute;
		left: 30px;
		bottom: -17px;
		width: 6px;
		height: 6px;
		border-radius: 50%;
		background: #a3cfa3;
	}
`;

const DockTile = styled.div`
	width: 65px;
	height: 65px;
	display: flex;
	align-items: center;
	justify-content: center;
	border-radius: 15px;
	background: ${(p) => p.$bg};
	color: ${(p) => p.$color};
	font-family: ${mac};
	font-size: 38px;
	font-weight: 600;
`;

const DockBadge = styled.span`
	position: absolute;
	top: -9px;
	right: -9px;
	width: 30px;
	height: 30px;
	display: flex;
	align-items: center;
	justify-content: center;
	border-radius: 50%;
	background: #eb3b36;
	color: #fff;
	font-family: ${mac};
	font-size: 18px;
	font-weight: 500;
`;

const DockDivider = styled.span`
	width: 2px;
	height: 74px;
	margin: 0 9px;
	flex: none;
	background: rgba(180, 210, 180, 0.45);
`;
